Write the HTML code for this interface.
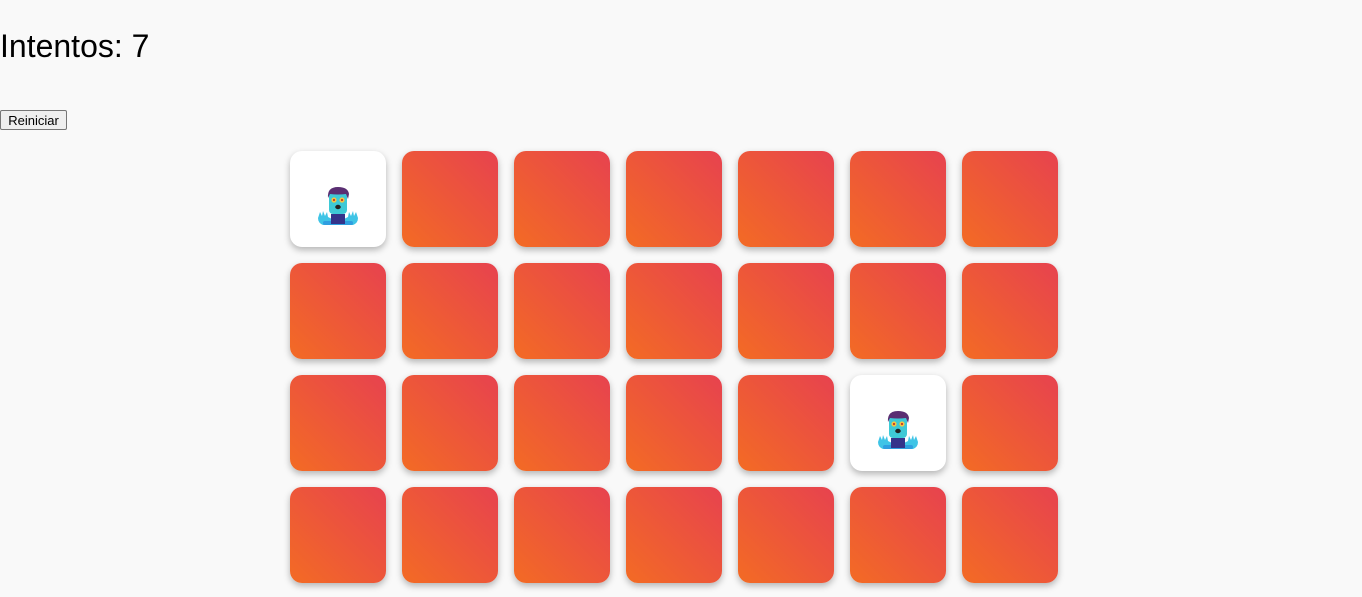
<!DOCTYPE html>
<html><head><meta charset="utf-8"><style>
html,body{margin:0;padding:0;background:#f9f9f9;width:1362px;height:597px;overflow:hidden;font-family:"Liberation Sans",Arial,sans-serif;}
h1{position:absolute;left:0;top:26px;margin:0;font-size:32px;font-weight:normal;color:#000;line-height:40px;}
button{position:absolute;left:0;top:110px;height:20px;width:67px;font-family:"Liberation Sans",Arial,sans-serif;font-size:13px;padding:0;border:1px solid #767676;border-radius:2px;background:#efefef;color:#000;}
.grid{position:absolute;left:290px;top:151px;display:grid;grid-template-columns:repeat(7,96px);grid-auto-rows:96px;gap:16px;}
.c{border-radius:12px;background:linear-gradient(to top right,#f36b24,#e7424f);box-shadow:0 3px 7px rgba(0,0,0,0.28);position:relative;}
.c.o{background:#fff;}
.c svg{position:absolute;left:27px;top:34px;width:42px;height:42px;}
</style></head><body>
<h1>Intentos: 7</h1>
<button>Reiniciar</button>
<div class="grid">
<div class="c o"><svg viewBox="0 0 42 42">
<path d="M1 33 L3 27 L5 31 L6 26 L8 31 L10 27 L11 32 L15 34 L15 40 L6 40 Q1 38 1 33 Z" fill="#3fc4e6"/>
<path d="M41 33 L39 27 L37 31 L36 26 L34 31 L32 27 L31 32 L27 34 L27 40 L36 40 Q41 38 41 33 Z" fill="#3fc4e6"/>
<rect x="6" y="36" width="30" height="4" rx="2" fill="#2f9ee0"/>
<rect x="14" y="29" width="14" height="10" fill="#34338a"/>
<rect x="12" y="7" width="18" height="22" rx="4" fill="#3ec9d6"/>
<path d="M11 13 Q10 2 21 2 Q31 2 32 9 L31 14 L29 9 Q21 10 13 9 Z" fill="#5a2e72"/>
<circle cx="17" cy="15" r="2.6" fill="#f5c542"/><circle cx="25" cy="15" r="2.6" fill="#f5c542"/>
<circle cx="17" cy="15" r="1.1" fill="#c0392b"/><circle cx="25" cy="15" r="1.1" fill="#c0392b"/>
<ellipse cx="21" cy="22" rx="2.8" ry="2.2" fill="#222"/>
</svg></div>
<div class="c"></div><div class="c"></div><div class="c"></div><div class="c"></div><div class="c"></div><div class="c"></div>
<div class="c"></div><div class="c"></div><div class="c"></div><div class="c"></div><div class="c"></div><div class="c"></div><div class="c"></div>
<div class="c"></div><div class="c"></div><div class="c"></div><div class="c"></div><div class="c"></div>
<div class="c o"><svg viewBox="0 0 42 42">
<path d="M1 33 L3 27 L5 31 L6 26 L8 31 L10 27 L11 32 L15 34 L15 40 L6 40 Q1 38 1 33 Z" fill="#3fc4e6"/>
<path d="M41 33 L39 27 L37 31 L36 26 L34 31 L32 27 L31 32 L27 34 L27 40 L36 40 Q41 38 41 33 Z" fill="#3fc4e6"/>
<rect x="6" y="36" width="30" height="4" rx="2" fill="#2f9ee0"/>
<rect x="14" y="29" width="14" height="10" fill="#34338a"/>
<rect x="12" y="7" width="18" height="22" rx="4" fill="#3ec9d6"/>
<path d="M11 13 Q10 2 21 2 Q31 2 32 9 L31 14 L29 9 Q21 10 13 9 Z" fill="#5a2e72"/>
<circle cx="17" cy="15" r="2.6" fill="#f5c542"/><circle cx="25" cy="15" r="2.6" fill="#f5c542"/>
<circle cx="17" cy="15" r="1.1" fill="#c0392b"/><circle cx="25" cy="15" r="1.1" fill="#c0392b"/>
<ellipse cx="21" cy="22" rx="2.8" ry="2.2" fill="#222"/>
</svg></div>
<div class="c"></div>
<div class="c"></div><div class="c"></div><div class="c"></div><div class="c"></div><div class="c"></div><div class="c"></div><div class="c"></div>
</div>
</body></html>
